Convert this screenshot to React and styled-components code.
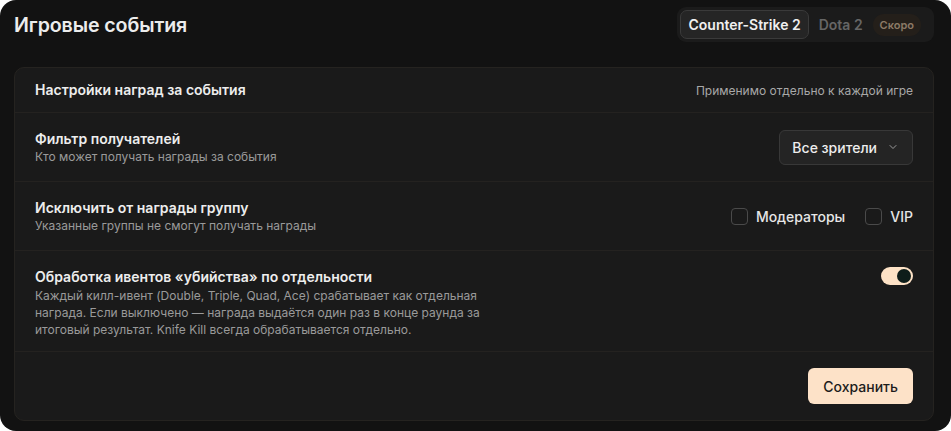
import React from 'react';
import styled, { createGlobalStyle } from 'styled-components';

const GlobalStyle = createGlobalStyle`
    html, body {
        margin: 0;
        padding: 0;
        background: #ffffff;
    }
    body {
        font-family: Inter, "Noto Sans", sans-serif;
        -webkit-font-smoothing: antialiased;
    }
`;

const Page = styled.div`
    width: 951px;
    height: 431px;
    box-sizing: border-box;
    background: #121212;
    border-radius: 16px;
    padding: 7px 17px 12px 14px;
    display: flex;
    flex-direction: column;
    gap: 25px;
`;

const TopBar = styled.div`
    display: flex;
    align-items: center;
    justify-content: space-between;
    height: 35px;
`;

const Title = styled.h1`
    margin: 0;
    font-size: 19.6px;
    font-weight: 600;
    color: #ececec;
    letter-spacing: -0.1px;
`;

const Tabs = styled.div`
    display: flex;
    align-items: center;
    gap: 1px;
    height: 35px;
    box-sizing: border-box;
    padding: 3px 13px 3px 3px;
    background: #1b1b1b;
    border-radius: 9px;
`;

const Tab = styled.button`
    font-family: inherit;
    font-size: 14px;
    font-weight: 600;
    height: 29px;
    padding: 0 ${p => (p.$active ? '7px' : '8px')};
    border-radius: 7px;
    border: 1px solid ${p => (p.$active ? '#3a3a3a' : 'transparent')};
    background: ${p => (p.$active ? '#252525' : 'transparent')};
    color: ${p => (p.$active ? '#f0f0f0' : '#666666')};
`;

const Soon = styled.span`
    font-size: 11px;
    font-weight: 600;
    color: #8c7a66;
    background: #241f1a;
    border-radius: 999px;
    padding: 4px 7px;
`;

const Card = styled.div`
    flex: 1;
    background: #1a1a1a;
    border: 1px solid #252320;
    border-radius: 10px;
    display: flex;
    flex-direction: column;
`;

const Row = styled.div`
    display: flex;
    align-items: ${p => p.$top ? 'flex-start' : 'center'};
    justify-content: space-between;
    gap: 20px;
    padding: ${p => p.$pad || '16px 20px'};
    border-bottom: 1px solid #242220;
`;

const Info = styled.div`
    display: flex;
    flex-direction: column;
`;

const RowTitle = styled.div`
    font-size: 14px;
    font-weight: 600;
    line-height: 20px;
    color: #ededed;
`;

const RowText = styled.div`
    font-size: 12px;
    line-height: ${p => p.$lh || '16px'};
    color: #9a9a9a;
    max-width: ${p => p.$max || 'none'};
`;

const Note = styled.div`
    font-size: 12px;
    color: #a8a8a8;
`;

const Select = styled.button`
    display: flex;
    align-items: center;
    gap: 10px;
    height: 35px;
    padding: 0 13px 0 12px;
    font-family: inherit;
    font-size: 14px;
    font-weight: 500;
    color: #ededed;
    background: #242424;
    border: 1px solid #383838;
    border-radius: 6px;
`;

const Checks = styled.div`
    display: flex;
    align-items: center;
    gap: 20px;
`;

const CheckLabel = styled.label`
    display: flex;
    align-items: center;
    gap: 8px;
    font-size: 14px;
    font-weight: 500;
    color: #e6e6e6;
`;

const Box = styled.span`
    width: 15px;
    height: 15px;
    border: 1px solid #4a4a4a;
    border-radius: 4px;
`;

const Switch = styled.span`
    display: flex;
    align-items: center;
    justify-content: flex-end;
    width: 32px;
    height: 18px;
    box-sizing: border-box;
    padding: 2px;
    border-radius: 999px;
    background: #fde2c6;
`;

const Knob = styled.span`
    width: 14px;
    height: 14px;
    border-radius: 50%;
    background: #0e1d1a;
`;

const Footer = styled.div`
    display: flex;
    justify-content: flex-end;
    padding: 16px 20px;
`;

const SaveButton = styled.button`
    height: 36px;
    padding: 0 15px;
    font-family: inherit;
    font-size: 14px;
    font-weight: 500;
    color: #1c1c1c;
    background: #fde2c8;
    border: none;
    border-radius: 6px;
`;

const Chevron = () => (
    <svg width="12" height="12" viewBox="0 0 24 24" fill="none" stroke="#9a9a9a" strokeWidth="2" strokeLinecap="round" strokeLinejoin="round">
        <path d="m6 9 6 6 6-6" />
    </svg>
);

const App = () => {
    return (
        <Page>
            <GlobalStyle />
            <TopBar>
                <Title>Игровые события</Title>
                <Tabs>
                    <Tab $active>Counter-Strike 2</Tab>
                    <Tab>Dota 2</Tab>
                    <Soon>Скоро</Soon>
                </Tabs>
            </TopBar>
            <Card>
                <Row $pad="12px 20px">
                    <RowTitle>Настройки наград за события</RowTitle>
                    <Note>Применимо отдельно к каждой игре</Note>
                </Row>
                <Row>
                    <Info>
                        <RowTitle>Фильтр получателей</RowTitle>
                        <RowText>Кто может получать награды за события</RowText>
                    </Info>
                    <Select>
                        Все зрители
                        <Chevron />
                    </Select>
                </Row>
                <Row>
                    <Info>
                        <RowTitle>Исключить от награды группу</RowTitle>
                        <RowText>Указанные группы не смогут получать награды</RowText>
                    </Info>
                    <Checks>
                        <CheckLabel><Box />Модераторы</CheckLabel>
                        <CheckLabel><Box />VIP</CheckLabel>
                    </Checks>
                </Row>
                <Row $top $pad="16px 20px 13px">
                    <Info>
                        <RowTitle>Обработка ивентов «убийства» по отдельности</RowTitle>
                        <RowText $lh="17px" $max="455px">
                            Каждый килл-ивент (Double, Triple, Quad, Ace) срабатывает как отдельная награда. Если выключено — награда выдаётся один раз в конце раунда за итоговый результат. Knife Kill всегда обрабатывается отдельно.
                        </RowText>
                    </Info>
                    <Switch><Knob /></Switch>
                </Row>
                <Footer>
                    <SaveButton>Сохранить</SaveButton>
                </Footer>
            </Card>
        </Page>
    );
};

export default App;
